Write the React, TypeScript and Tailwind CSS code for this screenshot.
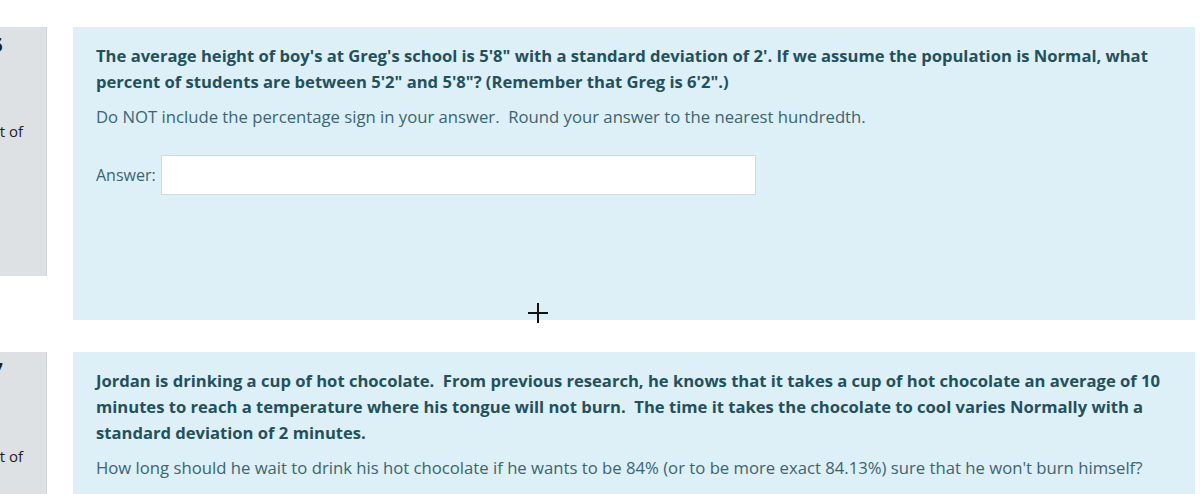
export default function App() {
  const font = { fontFamily: '"Open Sans", "Noto Sans", sans-serif' };
  return (
    <div className="relative h-[494px] w-[1200px] overflow-hidden bg-white" style={font}>
      <div className="flex flex-col gap-8 pt-[27px]">
        {/* question 5 */}
        <div className="flex items-start">
          <div className="flex h-[249px] w-[47px] shrink-0 flex-col items-end overflow-hidden border-r border-[#cfd4d8] bg-[#dde1e4] text-[#1d2125]">
            <div className="whitespace-nowrap pr-[43px] pt-[5px] text-[20px] font-bold leading-[26px]">Question 5</div>
            <div className="mt-[62px] whitespace-nowrap pr-[23px] text-[15px] leading-[22px]">Marked out of</div>
          </div>
          <div className="ml-[26px] mr-[5px] h-[293px] flex-1 bg-[#ddeff7] px-[23px] pt-[16px]">
            <p className="text-[16.6px] font-bold leading-[26px] text-[#22515d]">
              The average height of boy's at Greg's school is 5'8" with a standard deviation of 2'. If we assume the population is Normal, what percent of students are between 5'2" and 5'8"? (Remember that Greg is 6'2".)
            </p>
            <p className="mt-[9px] text-[16.7px] leading-[26px] text-[#3b6570]">
              Do NOT include the percentage sign in your answer.&nbsp; Round your answer to the nearest hundredth.
            </p>
            <div className="mt-[25px] flex items-center gap-[5px]">
              <span className="text-[16px] leading-[26px] text-[#3b6570]">Answer:</span>
              <div className="h-[40px] w-[595px] border border-[#cfdbe2] bg-white" />
            </div>
          </div>
        </div>
        {/* question 7 */}
        <div className="flex items-start">
          <div className="flex h-[160px] w-[47px] shrink-0 flex-col items-end overflow-hidden border-r border-[#cfd4d8] bg-[#dde1e4] text-[#1d2125]">
            <div className="whitespace-nowrap pr-[43px] pt-[5px] text-[20px] font-bold leading-[26px]">Question 7</div>
            <div className="mt-[62px] whitespace-nowrap pr-[23px] text-[15px] leading-[22px]">Marked out of</div>
          </div>
          <div className="ml-[26px] mr-[5px] h-[200px] flex-1 bg-[#ddeff7] px-[23px] pt-[16px]">
            <p className="text-[16.6px] font-bold leading-[26px] text-[#22515d]">
              Jordan is drinking a cup of hot chocolate.&nbsp; From previous research, he knows that it takes a cup of hot chocolate an average of 10 minutes to reach a temperature where his tongue will not burn.&nbsp; The time it takes the chocolate to cool varies Normally with a standard deviation of 2 minutes.
            </p>
            <p className="mt-[9px] text-[16.7px] leading-[26px] text-[#3b6570]">
              How long should he wait to drink his hot chocolate if he wants to be 84% (or to be more exact 84.13%) sure that he won't burn himself?
            </p>
          </div>
        </div>
      </div>
      {/* mouse crosshair */}
      <svg className="absolute left-[527px] top-[302px]" width="22" height="22" viewBox="0 0 22 22">
        <path d="M11 1v20M1 11h20" stroke="#111" strokeWidth="2" />
      </svg>
    </div>
  );
}
